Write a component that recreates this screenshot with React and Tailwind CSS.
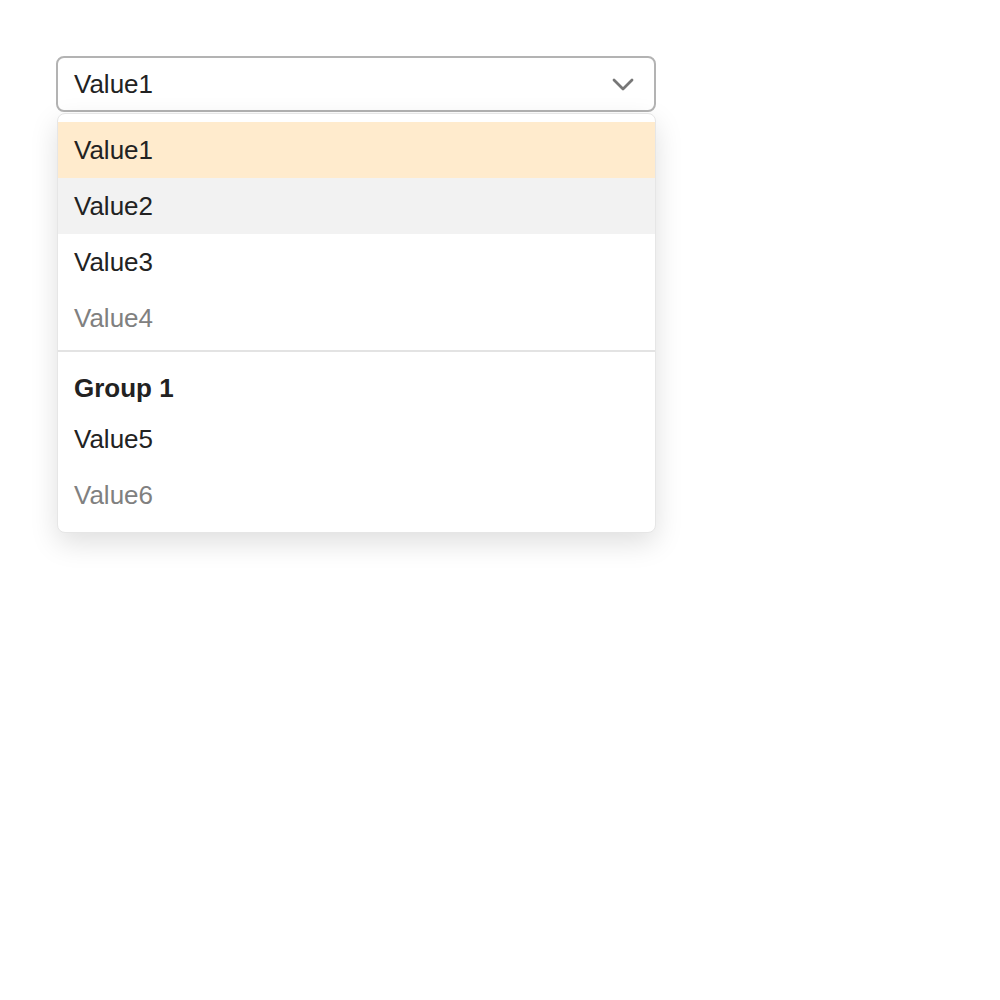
import React from 'react'

const options = [
  { value: 'Value1', selected: true },
  { value: 'Value2', hover: true },
  { value: 'Value3' },
  { value: 'Value4', disabled: true },
]

const groupOptions = [
  { value: 'Value5' },
  { value: 'Value6', disabled: true },
]

function Option({ value, selected, hover, disabled }) {
  let cls = 'h-[56px] flex items-center px-4 text-[26px] '
  if (selected) cls += 'bg-[#ffebcd] text-[#222]'
  else if (hover) cls += 'bg-[#f2f2f2] text-[#222]'
  else if (disabled) cls += 'text-[#808080]'
  else cls += 'text-[#222]'
  return <div className={cls}>{value}</div>
}

export default function App() {
  return (
    <div className="min-h-screen bg-white p-14 font-['Liberation_Sans',Arial,sans-serif]">
      <div className="w-[600px]">
        {/* 选择框 */}
        <div className="h-[56px] flex items-center justify-between rounded-lg border-2 border-[#b3b3b3] bg-white pl-4 pr-[20px]">
          <span className="text-[26px] text-[#222]">Value1</span>
          <svg width="22" height="14" viewBox="0 0 22 14" fill="none" stroke="#777" strokeWidth="2.8" strokeLinecap="round" strokeLinejoin="round">
            <path d="M2 3l9 9 9-9" />
          </svg>
        </div>

        {/* 下拉列表 */}
        <div className="mt-[1px] ml-[1px] w-[599px] rounded-lg border border-[#e6e6e6] bg-white pt-2 pb-[9px] shadow-[0_10px_28px_rgba(0,0,0,0.13)]">
          {options.map((o) => (
            <Option key={o.value} {...o} />
          ))}
          <div className="mt-1 h-[2px] bg-[#e3e3e3]" />
          <div className="h-[59px] flex items-center px-4 pt-[14px] text-[26px] font-bold text-[#222]">Group 1</div>
          {groupOptions.map((o) => (
            <Option key={o.value} {...o} />
          ))}
        </div>
      </div>
    </div>
  )
}
